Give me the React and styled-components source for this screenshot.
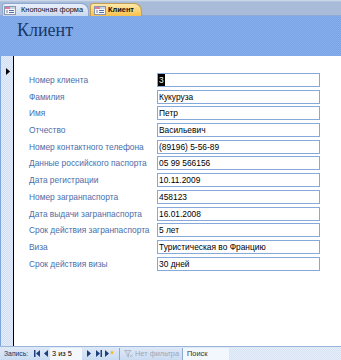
import React from 'react';
import styled, { createGlobalStyle } from 'styled-components';

const GlobalStyle = createGlobalStyle`
  html, body { margin: 0; padding: 0; background: #fff; overflow: hidden; }
  body { font-family: "Liberation Sans", Arial, sans-serif; }
`;

const Window = styled.div`
  width: 341px;
  height: 360px;
  display: flex;
  flex-direction: column;
  overflow: hidden;
  background: #fff;
`;

const TabBar = styled.div`
  height: 16px;
  box-sizing: border-box;
  background: linear-gradient(#cbd6e8 0 1px, #b3c4de 1px 2px, #a8bcd9 2px);
  border-bottom: 1px solid #8eabd6;
  display: flex;
  align-items: flex-end;
  padding-left: 2px;
  gap: 1px;
`;

const Tab = styled.div`
  height: 13px;
  box-sizing: border-box;
  display: flex;
  align-items: center;
  gap: ${p => (p.$active ? '2px' : '5px')};
  padding: 0 ${p => (p.$active ? '7px' : '5px')} 0 ${p => (p.$active ? '3px' : '1px')};
  border: 1px solid ${p => (p.$active ? '#c39d52' : '#8ea8cf')};
  border-bottom: none;
  border-radius: 3px 8px 0 0;
  background: ${p =>
    p.$active
      ? 'linear-gradient(#fde9ae, #fbd373 55%, #f6c04e)'
      : 'linear-gradient(#e9f0fa, #cad9ef)'};
  font-size: 7.4px;
  font-weight: ${p => (p.$active ? 700 : 400)};
  line-height: 10px;
  color: #111;
  margin-bottom: -1px;
  white-space: nowrap;
`;

const Header = styled.div`
  height: 40px;
  box-sizing: border-box;
  padding: 3px 0 0 17px;
  background: conic-gradient(#7ba4e5 25%, #86aeec 0 50%, #7ba4e5 0 75%, #86aeec 0) 0 0 / 2px 2px;
`;

const Title = styled.h1`
  margin: 0;
  font: 400 18px/22px "Liberation Serif", "Times New Roman", serif;
  color: #183868;
`;

const Body = styled.div`
  flex: 1;
  display: flex;
  min-height: 0;
`;

const Selector = styled.div`
  width: 14px;
  box-sizing: border-box;
  border-left: 1px solid #7ea4dc;
  border-right: 1px solid #000;
  background: conic-gradient(#e4edf9 25%, #cfdef3 0 50%, #e4edf9 0 75%, #cfdef3 0) 0 0 / 2px 2px;
  padding: 5px 0 0 5px;
`;

const Detail = styled.div`
  flex: 1;
  display: grid;
  grid-template-columns: 128px 163px;
  grid-auto-rows: 14px;
  row-gap: 2.7px;
  align-content: start;
  align-items: center;
  padding: 17px 0 0 15px;
`;

const Label = styled.div`
  font-size: 8.4px;
  color: #4a6ea9;
  white-space: nowrap;
`;

const Field = styled.div`
  height: 14px;
  box-sizing: border-box;
  border: 1px solid #86a9dc;
  font-size: 8.4px;
  line-height: 12px;
  padding-left: ${p => (p.$selected ? '0' : '1px')};
  color: #000;
  white-space: nowrap;
  overflow: hidden;
`;

const Selected = styled.span`
  display: inline-block;
  background: #000;
  color: #fff;
  padding: 0 1px;
  height: 12px;
`;

const NavBar = styled.div`
  height: 14px;
  box-sizing: border-box;
  border-top: 1px solid #9ab5dc;
  background: linear-gradient(#dfe9f7, #cadbf2);
  display: flex;
  align-items: center;
  padding-left: 4px;
  font-size: 7.4px;
  color: #15325f;
`;

const NavLabel = styled.span`
  width: 28px;
  white-space: nowrap;
  font-size: 6.8px;
`;

const NavBtn = styled.span`
  width: ${p => p.$w}px;
  height: 12px;
  display: flex;
  align-items: center;
  justify-content: center;
`;

const RecordBox = styled.span`
  width: 32px;
  height: 12px;
  box-sizing: border-box;
  background: #f4f8fd;
  padding-left: 2px;
  line-height: 12px;
  color: #000;
  white-space: nowrap;
`;

const Sep = styled.span`
  width: 1px;
  height: 12px;
  background: #8ea8cf;
  margin-left: ${p => p.$ml || 0}px;
`;

const Filter = styled.span`
  width: 62px;
  display: flex;
  align-items: center;
  gap: 2px;
  padding-left: 4px;
  box-sizing: border-box;
  color: #9aa6b8;
  white-space: nowrap;
  overflow: hidden;
`;

const SearchBox = styled.span`
  width: 46px;
  height: 12px;
  box-sizing: border-box;
  background: #f2f7fd;
  padding-left: 4px;
  line-height: 12px;
  color: #333;
`;

const Filler = styled.span`
  flex: 1;
  height: 13px;
  background: conic-gradient(#e6eefa 25%, #d6e3f5 0 50%, #e6eefa 0 75%, #d6e3f5 0) 0 0 / 2px 2px;
`;

const FormIcon = () => (
  <svg width="12" height="9" viewBox="0 0 12 9">
    <rect x="0.5" y="0.5" width="11" height="8" fill="#f6f7fa" stroke="#8a96ad" />
    <rect x="1" y="1" width="5" height="2" fill="#e27aa0" />
    <rect x="6" y="1" width="5" height="2" fill="#c9d2e2" />
    <rect x="5" y="4" width="5" height="1" fill="#5a73a6" />
    <rect x="5" y="6" width="5" height="1" fill="#5a73a6" />
    <rect x="2" y="4" width="2" height="3" fill="#b0bcd2" />
  </svg>
);

const RowArrow = () => (
  <svg width="4" height="7" viewBox="0 0 4 7">
    <path d="M0 0 L4 3.5 L0 7 Z" fill="#000" />
  </svg>
);

const NC = '#1e3f7a';
const FirstIcon = () => (
  <svg width="6" height="7" viewBox="0 0 6 7">
    <rect x="0" y="0" width="1.5" height="7" fill={NC} />
    <path d="M6 0 L2 3.5 L6 7 Z" fill={NC} />
  </svg>
);
const PrevIcon = () => (
  <svg width="4" height="7" viewBox="0 0 4 7">
    <path d="M4 0 L0 3.5 L4 7 Z" fill={NC} />
  </svg>
);
const NextIcon = () => (
  <svg width="4" height="7" viewBox="0 0 4 7">
    <path d="M0 0 L4 3.5 L0 7 Z" fill={NC} />
  </svg>
);
const LastIcon = () => (
  <svg width="6" height="7" viewBox="0 0 6 7">
    <path d="M0 0 L4 3.5 L0 7 Z" fill={NC} />
    <rect x="4.5" y="0" width="1.5" height="7" fill={NC} />
  </svg>
);
const NewIcon = () => (
  <svg width="9" height="7" viewBox="0 0 9 7">
    <path d="M0 0 L4 3.5 L0 7 Z" fill={NC} />
    <path d="M7 0 L7.6 1.8 L9 1.8 L7.9 2.8 L8.4 4.6 L7 3.6 L5.6 4.6 L6.1 2.8 L5 1.8 L6.4 1.8 Z" fill="#f0b820" />
  </svg>
);
const FunnelIcon = () => (
  <svg width="9" height="8" viewBox="0 0 9 8">
    <path d="M0.5 0.5 H7 L4.5 3.5 V7 L3 6 V3.5 Z" fill="#d7dde8" stroke="#a6afbf" strokeWidth="0.8" />
    <path d="M6 4.5 L8.5 7 M8.5 4.5 L6 7" stroke="#b3bccb" strokeWidth="0.9" />
  </svg>
);

const rows = [
  ['Номер клиента', '3', true],
  ['Фамилия', 'Кукуруза'],
  ['Имя', 'Петр'],
  ['Отчество', 'Васильевич'],
  ['Номер контактного телефона', '(89196) 5-56-89'],
  ['Данные российского паспорта', '05 99 566156'],
  ['Дата регистрации', '10.11.2009'],
  ['Номер загранпаспорта', '458123'],
  ['Дата выдачи загранпаспорта', '16.01.2008'],
  ['Срок действия загранпаспорта', '5 лет'],
  ['Виза', 'Туристическая во Францию'],
  ['Срок действия визы', '30 дней'],
];

export default function App() {
  return (
    <>
      <GlobalStyle />
      <Window>
        <TabBar>
          <Tab>
            <FormIcon />
            <span>Кнопочная форма</span>
          </Tab>
          <Tab $active>
            <FormIcon />
            <span>Клиент</span>
          </Tab>
        </TabBar>
        <Header>
          <Title>Клиент</Title>
        </Header>
        <Body>
          <Selector>
            <RowArrow />
          </Selector>
          <Detail>
            {rows.map(([label, value, sel]) => (
              <React.Fragment key={label}>
                <Label>{label}</Label>
                <Field $selected={sel}>{sel ? <Selected>{value}</Selected> : value}</Field>
              </React.Fragment>
            ))}
          </Detail>
        </Body>
        <NavBar>
          <NavLabel>Запись:</NavLabel>
          <NavBtn $w={10}><FirstIcon /></NavBtn>
          <NavBtn $w={8}><PrevIcon /></NavBtn>
          <RecordBox>3 из 5</RecordBox>
          <NavBtn $w={14}><NextIcon /></NavBtn>
          <NavBtn $w={6}><LastIcon /></NavBtn>
          <NavBtn $w={14}><NewIcon /></NavBtn>
          <Sep $ml={3} />
          <Filter>
            <FunnelIcon />
            <span>Нет фильтра</span>
          </Filter>
          <Sep />
          <SearchBox>Поиск</SearchBox>
          <Filler />
        </NavBar>
      </Window>
    </>
  );
}
